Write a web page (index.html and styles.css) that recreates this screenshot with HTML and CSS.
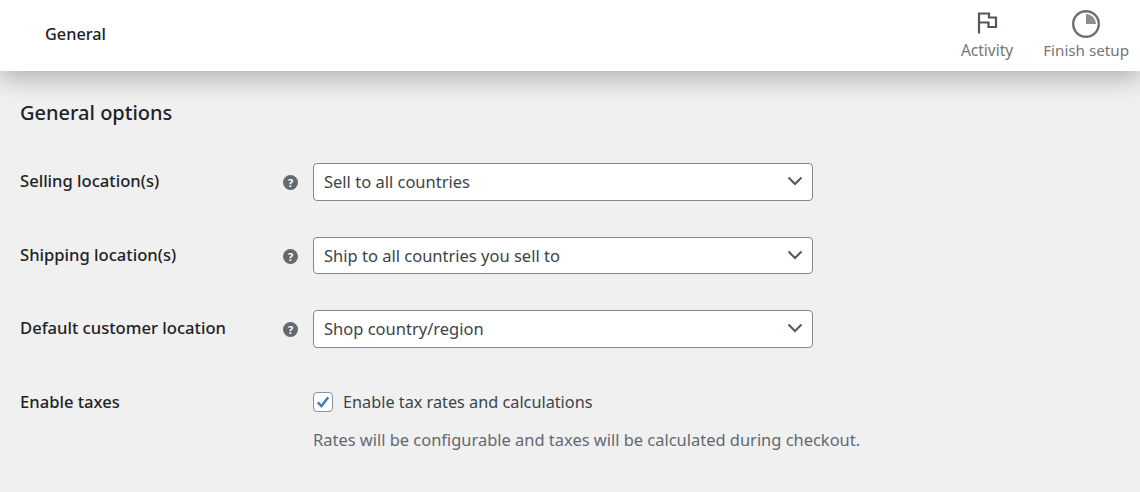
FILE: index.html
```html
<!DOCTYPE html>
<html lang="en">
<head>
<meta charset="utf-8">
<title>General options</title>
<link rel="stylesheet" href="styles.css">
</head>
<body>
<header class="topbar">
  <h1 class="page-title">General</h1>
  <nav class="actions">
    <button class="action action-activity" type="button">
      <svg class="action-icon" viewBox="0 0 24 24" width="24" height="24"><path d="M4 22.500V2.500H14V6.500H21V16H13.500V11.500H4" fill="none" stroke="#50575e" stroke-width="2.200"/></svg>
      <span>Activity</span>
    </button>
    <button class="action action-setup" type="button">
      <svg class="action-icon" viewBox="0 0 30 30" width="30" height="30"><circle cx="15" cy="15" r="12.800" fill="none" stroke="#6c7074" stroke-width="2.400"/><path d="M15 5A10 10 0 0 1 25 15H15z" fill="#8a8d91"/></svg>
      <span>Finish setup</span>
    </button>
  </nav>
</header>
<main class="content">
  <h2 class="section-title">General options</h2>
  <div class="form">
    <div class="row">
      <div class="label">Selling location(s)</div>
      <span class="help">?</span>
      <div class="select-wrap">
        <select class="select"><option>Sell to all countries</option></select>
        <svg class="chevron" viewBox="0 0 16 10" width="16" height="10"><path d="M1.500 1.500 8 8l6.500-6.500" fill="none" stroke="#50575e" stroke-width="2"/></svg>
      </div>
    </div>
    <div class="row">
      <div class="label">Shipping location(s)</div>
      <span class="help">?</span>
      <div class="select-wrap">
        <select class="select"><option>Ship to all countries you sell to</option></select>
        <svg class="chevron" viewBox="0 0 16 10" width="16" height="10"><path d="M1.500 1.500 8 8l6.500-6.500" fill="none" stroke="#50575e" stroke-width="2"/></svg>
      </div>
    </div>
    <div class="row">
      <div class="label">Default customer location</div>
      <span class="help">?</span>
      <div class="select-wrap">
        <select class="select"><option>Shop country/region</option></select>
        <svg class="chevron" viewBox="0 0 16 10" width="16" height="10"><path d="M1.500 1.500 8 8l6.500-6.500" fill="none" stroke="#50575e" stroke-width="2"/></svg>
      </div>
    </div>
    <div class="row row-tax">
      <div class="label">Enable taxes</div>
      <span></span>
      <div class="tax">
        <label class="check-line">
          <span class="checkbox"><svg viewBox="0 0 20 20" width="18" height="18"><path d="M4.200 10.300 8.300 14.500 15.800 4.800" fill="none" stroke="#3582c4" stroke-width="2.800"/></svg></span>
          Enable tax rates and calculations
        </label>
        <p class="desc">Rates will be configurable and taxes will be calculated during checkout.</p>
      </div>
    </div>
  </div>
</main>
</body>
</html>
```
FILE: styles.css
```css
* { box-sizing: border-box; }
html, body { margin: 0; height: 100%; }
body {
  width: 1140px;
  height: 492px;
  overflow: hidden;
  background: #f0f0f1;
  color: #1d2327;
  font-family: "Noto Sans", "Open Sans", sans-serif;
}
.topbar {
  height: 71px;
  background: #fff;
  display: flex;
  justify-content: space-between;
  align-items: stretch;
  box-shadow: 0 8px 24px rgba(0, 0, 0, .26);
  position: relative;
}
.page-title {
  margin: 0;
  padding: 24px 0 0 45px;
  font-size: 16.300px;
  line-height: 20px;
  font-weight: 500;
  color: #1e1e1e;
}
.actions { display: flex; gap: 30px; padding-right: 11px; }
.action {
  border: 0;
  background: none;
  padding: 8px 0 0;
  display: flex;
  flex-direction: column;
  align-items: center;
  font: inherit;
  font-size: 15.200px;
  line-height: 20px;
  color: #757575;
}
.action-activity span { font-size: 15.500px; }
.action-icon { display: block; width: 30px; height: 32px; }
.action-activity .action-icon { width: 24px; height: 24px; margin: 3px 0 5px; }
.section-title {
  margin: 0;
  padding: 30px 0 0 20px;
  font-size: 20px;
  line-height: 24px;
  font-weight: 500;
  color: #1d2327;
}
.form { padding: 38px 0 0 20px; }
.row {
  display: grid;
  grid-template-columns: 263px 30px 500px;
  align-items: start;
  height: 73.5px;
}
.label {
  font-size: 16.600px;
  line-height: 21px;
  font-weight: 500;
  padding-top: 7px;
}
.help {
  width: 15px;
  height: 15px;
  margin-top: 12px;
  border-radius: 50%;
  background: #646970;
  color: #fff;
  font-size: 11px;
  line-height: 15px;
  font-weight: 700;
  text-align: center;
}
.select-wrap { position: relative; height: 37.500px; }
.select {
  display: block;
  width: 100%;
  height: 100%;
  appearance: none;
  background: #fff;
  border: 1px solid #7e8993;
  border-radius: 4px;
  padding: 0 30px 0 10px;
  font: inherit;
  font-size: 16.500px;
  color: #3c434a;
}
.chevron { position: absolute; right: 10px; top: 13px; }
.check-line {
  display: flex;
  align-items: center;
  gap: 10px;
  font-size: 16.250px;
  line-height: 22px;
  color: #3c434a;
}
.checkbox {
  width: 20px;
  height: 20px;
  background: #fff;
  border: 1px solid #8c8f94;
  border-radius: 4px;
  display: flex;
  align-items: center;
  justify-content: center;
}
.desc {
  margin: 16px 0 0;
  font-size: 16.450px;
  line-height: 22px;
  color: #646970;
}
.tax { padding-top: 7px; white-space: nowrap; }
```
